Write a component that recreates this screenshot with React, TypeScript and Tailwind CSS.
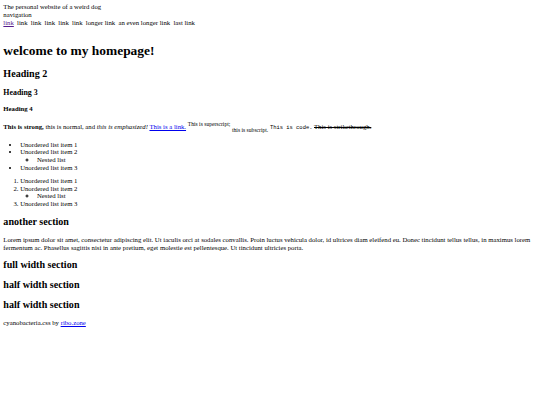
import React from "react";

// plain default-styles homepage, rendered at ~0.42 scale
const navItems = ["link", "link", "link", "link", "link", "link", "longer link", "an even longer link", "last link"];

function BulletList({ ordered }: { ordered?: boolean }) {
  const items = (
    <>
      <li>Unordered list item 1</li>
      <li>
        Unordered list item 2
        <ul className="list-[circle] pl-[16.8px]">
          <li>Nested list</li>
        </ul>
      </li>
      <li>Unordered list item 3</li>
    </>
  );
  return ordered ? (
    <ol className="mt-[5.4px] mb-[6.72px] list-decimal pl-[16.8px]">{items}</ol>
  ) : (
    <ul className="mt-[6.72px] mb-[5.4px] list-disc pl-[16.8px]">{items}</ul>
  );
}

export default function App() {
  return (
    <div className="min-h-[405px] bg-white p-[3.36px] font-['Liberation_Serif',serif] text-[6.72px] leading-[1.15] text-black">
      <header>
        <div>The personal website of a weird dog</div>
        <div>navigation</div>
        <div>
          {navItems.map((label, i) =>
            i === 0 ? (
              <a key={i} href="#" className="mr-[3.3px] text-[#551a8b] underline">
                {label}
              </a>
            ) : (
              <span key={i} className="mr-[3.3px]">
                {label}
              </span>
            ),
          )}
        </div>
      </header>

      <main>
        <h1 className="mt-[16.7px] mb-[9px] text-[13.44px] font-bold leading-[1.15]">welcome to my homepage!</h1>
        <h2 className="my-[8.4px] text-[10.08px] font-bold leading-[1.15]">Heading 2</h2>
        <h3 className="mt-[7.86px] mb-[7.2px] text-[7.86px] font-bold leading-[1.15]">Heading 3</h3>
        <h4 className="mt-[8.2px] mb-[8.6px] text-[6.72px] font-bold leading-[1.15]">Heading 4</h4>

        <p className="mt-[6.72px] mb-[7.4px]">
          <strong>This is strong,</strong> this is normal, and <em>this is emphasized!</em>{" "}
          <a href="#" className="text-[#0000ee] underline">
            This is a link.
          </a>{" "}
          <sup className="top-0 align-super text-[5.6px] leading-[1.15]">This is superscript;</sup>{" "}
          <sub className="bottom-0 align-sub text-[5.6px] leading-[1.15]">this is subscript.</sub>{" "}
          <code className="font-['Liberation_Mono',monospace] text-[5.46px]">This is code.</code>{" "}
          <s>This is strikethrough.</s>
        </p>

        <BulletList />
        <BulletList ordered />

        <section>
          <h2 className="my-[8.4px] text-[10.08px] font-bold leading-[1.15]">another section</h2>
          <p className="my-[6.72px]">
            Lorem ipsum dolor sit amet, consectetur adipiscing elit. Ut iaculis orci at sodales convallis. Proin luctus
            vehicula dolor, id ultrices diam eleifend eu. Donec tincidunt tellus tellus, in maximus lorem fermentum ac.
            Phasellus sagittis nisi in ante pretium, eget molestie est pellentesque. Ut tincidunt ultricies porta.
          </p>
        </section>

        <section>
          <h2 className="mt-[7.8px] mb-[7.8px] text-[10.08px] font-bold leading-[1.15]">full width section</h2>
        </section>
        <section>
          <h2 className="my-[8.4px] text-[10.08px] font-bold leading-[1.15]">half width section</h2>
        </section>
        <section>
          <h2 className="mt-[8.4px] mb-[8.4px] text-[10.08px] font-bold leading-[1.15]">half width section</h2>
        </section>
      </main>

      <footer>
        cyanobacteria.css by{" "}
        <a href="#" className="text-[#0000ee] underline">
          ribo.zone
        </a>
      </footer>
    </div>
  );
}
